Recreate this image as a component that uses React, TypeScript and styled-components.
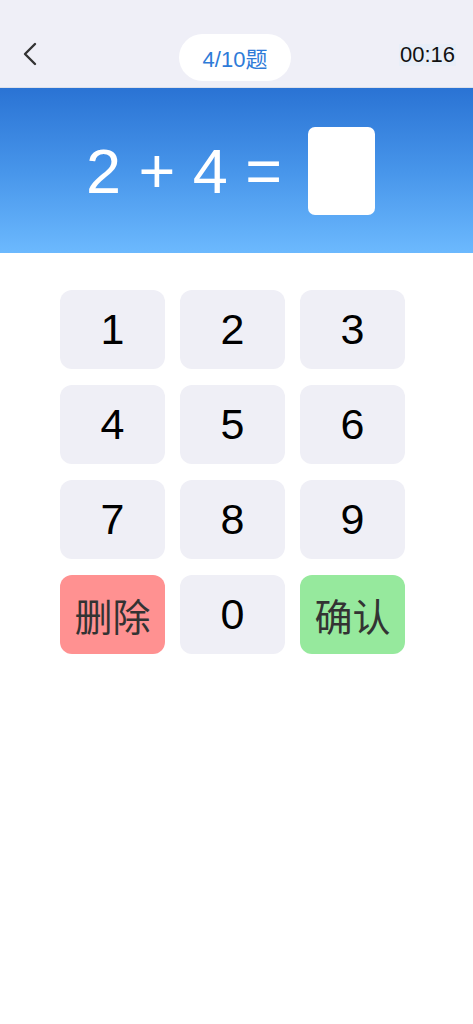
import React from "react";
import styled, { createGlobalStyle } from "styled-components";

const GlobalStyle = createGlobalStyle`
  html, body { margin: 0; padding: 0; background: #ffffff; }
  body { font-family: "Liberation Sans", Arial, "Noto Sans CJK SC", sans-serif; }
  * { box-sizing: border-box; }
`;

const Page = styled.div`
  width: 473px;
  min-height: 1024px;
  background: #ffffff;
  display: flex;
  flex-direction: column;
`;

const Header = styled.header`
  height: 88px;
  background: #efeff7;
  border-bottom: 1px solid #dde0e9;
  padding: 22px 17px 0 22px;
  display: grid;
  grid-template-columns: 1fr auto 1fr;
  align-items: center;
`;

const BackButton = styled.button`
  justify-self: start;
  width: 18px;
  height: 26px;
  padding: 0;
  border: none;
  background: transparent;
  display: flex;
  align-items: center;
  justify-content: flex-start;
  margin-top: -1px;
`;

const ProgressPill = styled.div`
  width: 112px;
  height: 47px;
  margin-top: 5px;
  margin-right: 8px;
  border-radius: 24px;
  background: #ffffff;
  color: #2e7bd8;
  font-size: 22px;
  display: flex;
  align-items: center;
  justify-content: center;
  font-family: "Liberation Sans", Arial, "Noto Sans CJK SC", sans-serif;
`;

const Timer = styled.div`
  justify-self: end;
  font-size: 22px;
  color: #111111;
  background: #e8eef8;
  line-height: 22px;
  padding: 0 1px;
  margin-top: 1px;
`;

const QuestionBand = styled.section`
  height: 165px;
  background: linear-gradient(180deg, #2a73d4 0%, #4795ea 50%, #6cb9fe 100%);
  display: flex;
  align-items: center;
  justify-content: center;
  gap: 26px;
  padding-right: 12px;
`;

const Expression = styled.div`
  color: #ffffff;
  font-size: 63px;
  line-height: 1;
  white-space: pre;
  margin-top: 2px;
`;

const AnswerBox = styled.div`
  width: 67px;
  height: 88px;
  background: #ffffff;
  border-radius: 7px;
`;

const Keypad = styled.div`
  padding: 37px 68px 0 60px;
  display: grid;
  grid-template-columns: repeat(3, 1fr);
  column-gap: 15px;
  row-gap: 16px;
`;

type KeyTone = "plain" | "danger" | "confirm";

const toneBg: Record<KeyTone, string> = {
  plain: "#efeff6",
  danger: "#ff9191",
  confirm: "#96e99d",
};

const Key = styled.button<{ $tone: KeyTone }>`
  height: 79px;
  border: none;
  border-radius: 12px;
  background: ${(p) => toneBg[p.$tone]};
  color: ${(p) => (p.$tone === "plain" ? "#000000" : "#333333")};
  font-family: "Liberation Sans", Arial, "Noto Sans CJK SC", sans-serif;
  font-size: ${(p) => (p.$tone === "plain" ? "43px" : "38px")};
  display: flex;
  align-items: center;
  justify-content: center;
  padding: 0;
  cursor: pointer;
`;

const keys: { label: string; tone: KeyTone }[] = [
  { label: "1", tone: "plain" },
  { label: "2", tone: "plain" },
  { label: "3", tone: "plain" },
  { label: "4", tone: "plain" },
  { label: "5", tone: "plain" },
  { label: "6", tone: "plain" },
  { label: "7", tone: "plain" },
  { label: "8", tone: "plain" },
  { label: "9", tone: "plain" },
  { label: "删除", tone: "danger" },
  { label: "0", tone: "plain" },
  { label: "确认", tone: "confirm" },
];

export default function App() {
  return (
    <Page>
      <GlobalStyle />
      <Header>
        <BackButton aria-label="back">
          <svg width="15" height="24" viewBox="0 0 15 24">
            <path
              d="M13 2 L3 12 L13 22"
              fill="none"
              stroke="#333333"
              strokeWidth="2.4"
              strokeLinecap="round"
              strokeLinejoin="round"
            />
          </svg>
        </BackButton>
        <ProgressPill>4/10题</ProgressPill>
        <Timer>00:16</Timer>
      </Header>
      <QuestionBand>
        <Expression>2 + 4 =</Expression>
        <AnswerBox />
      </QuestionBand>
      <Keypad>
        {keys.map((k) => (
          <Key key={k.label} $tone={k.tone}>
            {k.label}
          </Key>
        ))}
      </Keypad>
    </Page>
  );
}
